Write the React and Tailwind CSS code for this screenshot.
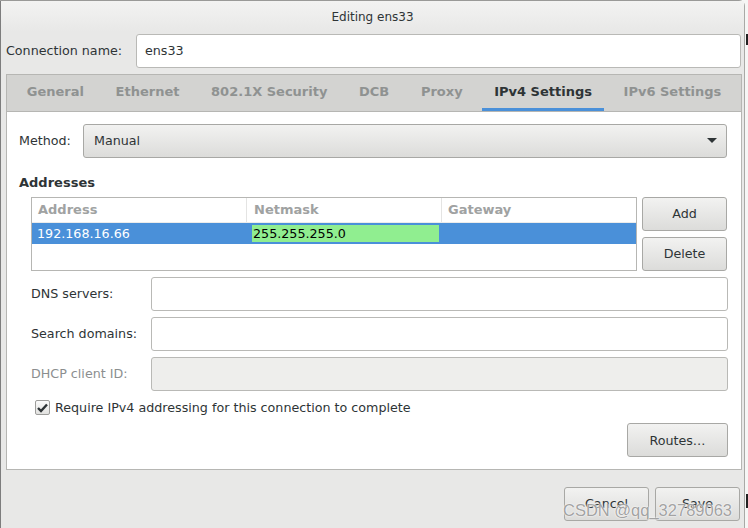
import React from 'react'

const tabs = ['General', 'Ethernet', '802.1X Security', 'DCB', 'Proxy', 'IPv4 Settings', 'IPv6 Settings']

function GtkButton({ className = '', children }) {
  return (
    <div
      className={`flex items-center rounded-[3px] border border-[#a8a8a5] bg-gradient-to-b from-[#f2f2f1] to-[#dcdcda] text-[12.7px] text-[#2e3436] ${className}`}
    >
      {children}
    </div>
  )
}

function Entry({ className = '', disabled = false, children }) {
  return (
    <div
      className={`flex items-center rounded-[3px] border border-[#b9b9b6] px-[8px] text-[12.7px] text-[#2e3436] ${
        disabled ? 'bg-[#eeeeec]' : 'bg-white'
      } ${className}`}
    >
      {children}
    </div>
  )
}

function FieldRow({ label, disabled }) {
  return (
    <div className="flex items-center">
      <div className={`w-[120px] shrink-0 whitespace-nowrap text-[12.7px] ${disabled ? 'text-[#8b8e8f]' : 'text-[#2e3436]'}`}>
        {label}
      </div>
      <Entry className="h-[34px] w-[577px]" disabled={disabled} />
    </div>
  )
}

export default function App() {
  return (
    <div className="relative flex h-[528px] w-[748px] overflow-hidden bg-[#f6f6f5] font-['DejaVu_Sans',sans-serif]">
      {/* dialog window */}
      <div className="flex h-full w-[745px] shrink-0 flex-col rounded-tr-[6px] border-l border-r border-t border-l-[#7d7d7d] border-r-[#a9a9a6] border-t-[#9a9a98] bg-[#e8e8e7]">
        {/* title */}
        <div className="flex h-[31px] items-center justify-center bg-gradient-to-b from-[#f3f3f2] to-[#e8e8e7] text-[12px] text-[#2e3436]">
          Editing ens33
        </div>

        {/* connection name */}
        <div className="mt-[2px] flex items-center pl-[5px]">
          <div className="w-[130px] shrink-0 whitespace-nowrap text-[12.7px] text-[#2e3436]">Connection name:</div>
          <Entry className="h-[34px] w-[605px]">ens33</Entry>
        </div>

        {/* notebook */}
        <div className="ml-[5px] mt-[6px] flex h-[396px] w-[736px] flex-col border border-[#b6b6b3] bg-white">
          <div className="flex h-[37px] shrink-0 border-b border-[#b6b6b3] bg-[#d3d3d1] pl-[4px]">
            {tabs.map((t) => (
              <div key={t} className="flex flex-col px-[4px]">
                <div
                  className={`flex flex-1 items-center whitespace-nowrap px-[11.8px] pt-[1px] text-[13px] font-bold ${
                    t === 'IPv4 Settings' ? 'text-[#2e3436]' : 'text-[#8f9291]'
                  }`}
                >
                  {t}
                </div>
                <div className={`h-[3px] ${t === 'IPv4 Settings' ? 'bg-[#4a90d9]' : ''}`} />
              </div>
            ))}
          </div>

          <div className="flex flex-col pl-[12px] pr-[13px] pt-[12px]">
            {/* method */}
            <div className="flex items-center">
              <div className="w-[64px] shrink-0 text-[12.7px] text-[#2e3436]">Method:</div>
              <GtkButton className="h-[34px] w-[644px] justify-between pl-[10px] pr-[9px]">
                <span>Manual</span>
                <svg width="10" height="6" viewBox="0 0 10 6">
                  <path d="M0 0 L10 0 L5 5 Z" fill="#2e3436" />
                </svg>
              </GtkButton>
            </div>

            <div className="mt-[17px] text-[13px] font-bold leading-[16px] text-[#2e3436]">Addresses</div>

            {/* addresses table + buttons */}
            <div className="ml-[12px] mt-[6px] flex">
              <div className="flex h-[74px] w-[606px] flex-col border border-[#b6b6b3] bg-white">
                <div className="flex h-[25px] border-b border-[#ececeb] text-[13px] font-bold text-[#a0a2a2]">
                  <div className="flex w-[215px] items-center border-r border-[#e4e4e3] pl-[6px]">Address</div>
                  <div className="flex w-[195px] items-center border-r border-[#e4e4e3] pl-[7px]">Netmask</div>
                  <div className="flex flex-1 items-center pl-[6px]">Gateway</div>
                </div>
                <div className="flex h-[21px] bg-[#4a90d9] text-[12.7px]">
                  <div className="flex w-[215px] items-center pl-[5px] text-white">192.168.16.66</div>
                  <div className="flex w-[195px] items-center py-[2px] pl-[5px] pr-[3px]">
                    <div className="flex h-full flex-1 items-center bg-[#90ee90] pl-[1px] text-black">255.255.255.0</div>
                  </div>
                  <div className="flex-1" />
                </div>
              </div>
              <div className="ml-[5px] flex flex-col gap-[6px]">
                <GtkButton className="h-[34px] w-[85px] justify-center">Add</GtkButton>
                <GtkButton className="h-[34px] w-[85px] justify-center">Delete</GtkButton>
              </div>
            </div>

            {/* dns / search / dhcp */}
            <div className="ml-[12px] mt-[6px] flex flex-col gap-[6px]">
              <FieldRow label="DNS servers:" />
              <FieldRow label="Search domains:" />
              <FieldRow label="DHCP client ID:" disabled />
            </div>

            {/* require ipv4 */}
            <div className="ml-[16px] mt-[7px] flex items-center">
              <div className="flex h-[15px] w-[15px] items-center justify-center rounded-[2px] border border-[#9d9d9b] bg-gradient-to-b from-[#fbfbfb] to-[#e2e2e0]">
                <svg width="11" height="10" viewBox="0 0 11 10">
                  <path d="M1 5 L4 8 L10 1.5" fill="none" stroke="#2e3436" strokeWidth="2.4" />
                </svg>
              </div>
              <div className="ml-[5px] whitespace-nowrap text-[12.7px] text-[#2e3436]">
                Require IPv4 addressing for this connection to complete
              </div>
            </div>

            <div className="mt-[6px] flex justify-end">
              <GtkButton className="h-[34px] w-[101px] justify-center">Routes…</GtkButton>
            </div>
          </div>
        </div>

        {/* dialog buttons */}
        <div className="mt-[17px] flex justify-end gap-[6px] pr-[4px]">
          <GtkButton className="h-[34px] w-[85px] justify-center">Cancel</GtkButton>
          <GtkButton className="h-[34px] w-[85px] justify-center">Save</GtkButton>
        </div>
      </div>

      {/* strip of the desktop behind the window */}
      <div className="flex flex-1 flex-col">
        <div className="ml-[1px] mt-[34px] h-[11px] w-[2px] bg-[#222]" />
        <div className="ml-[1px] mt-[449px] h-[14px] w-[2px] bg-[#222]" />
      </div>

      {/* watermark */}
      <div className="pointer-events-none absolute left-[563px] top-[500px] whitespace-nowrap font-['Liberation_Sans',sans-serif] text-[16.5px] leading-[20px] text-[#8a8a8a]/80 [text-shadow:0_0_1px_#ffffff,0_0_2px_#ffffff]">
        CSDN @qq_32789063
      </div>
    </div>
  )
}
